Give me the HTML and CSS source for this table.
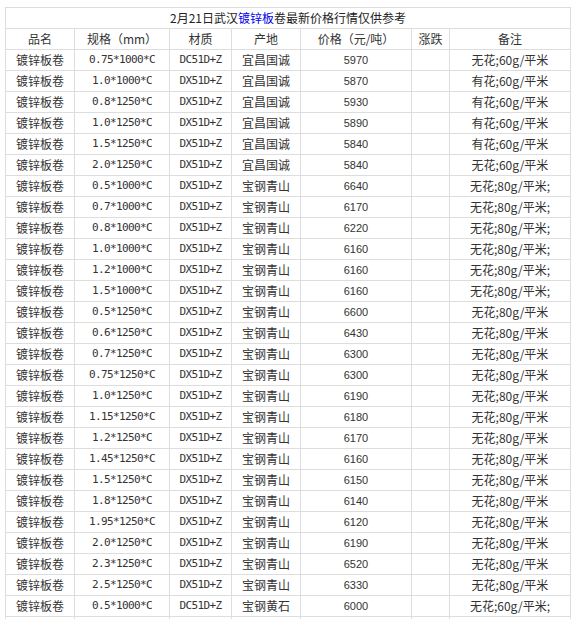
FILE: index.html
```html
<!DOCTYPE html>
<html lang="zh-CN">
<head>
<meta charset="utf-8">
<title>2月21日武汉镀锌板卷最新价格行情</title>
<link rel="stylesheet" href="styles.css">
</head>
<body>
<div class="wrap">
<table class="price">
<colgroup>
<col class="c1"><col class="c2"><col class="c3"><col class="c4"><col class="c5"><col class="c6"><col class="c7">
</colgroup>
<tr><td colspan="7" class="title">2月21日武汉<span class="hl">镀锌板</span>卷最新价格行情仅供参考</td></tr>
<tr><td>品名</td><td>规格（mm）</td><td>材质</td><td>产地</td><td>价格（元/吨）</td><td>涨跌</td><td>备注</td></tr>
<tr><td>镀锌板卷</td><td class="m">0.75*1000*C</td><td class="m">DC51D+Z</td><td>宜昌国诚</td><td class="n">5970</td><td></td><td>无花;60g/平米</td></tr>
<tr><td>镀锌板卷</td><td class="m">1.0*1000*C</td><td class="m">DX51D+Z</td><td>宜昌国诚</td><td class="n">5870</td><td></td><td>有花;60g/平米</td></tr>
<tr><td>镀锌板卷</td><td class="m">0.8*1250*C</td><td class="m">DX51D+Z</td><td>宜昌国诚</td><td class="n">5930</td><td></td><td>有花;60g/平米</td></tr>
<tr><td>镀锌板卷</td><td class="m">1.0*1250*C</td><td class="m">DX51D+Z</td><td>宜昌国诚</td><td class="n">5890</td><td></td><td>有花;60g/平米</td></tr>
<tr><td>镀锌板卷</td><td class="m">1.5*1250*C</td><td class="m">DX51D+Z</td><td>宜昌国诚</td><td class="n">5840</td><td></td><td>有花;60g/平米</td></tr>
<tr><td>镀锌板卷</td><td class="m">2.0*1250*C</td><td class="m">DX51D+Z</td><td>宜昌国诚</td><td class="n">5840</td><td></td><td>无花;60g/平米</td></tr>
<tr><td>镀锌板卷</td><td class="m">0.5*1000*C</td><td class="m">DX51D+Z</td><td>宝钢青山</td><td class="n">6640</td><td></td><td>无花;80g/平米;</td></tr>
<tr><td>镀锌板卷</td><td class="m">0.7*1000*C</td><td class="m">DX51D+Z</td><td>宝钢青山</td><td class="n">6170</td><td></td><td>无花;80g/平米;</td></tr>
<tr><td>镀锌板卷</td><td class="m">0.8*1000*C</td><td class="m">DX51D+Z</td><td>宝钢青山</td><td class="n">6220</td><td></td><td>无花;80g/平米;</td></tr>
<tr><td>镀锌板卷</td><td class="m">1.0*1000*C</td><td class="m">DX51D+Z</td><td>宝钢青山</td><td class="n">6160</td><td></td><td>无花;80g/平米;</td></tr>
<tr><td>镀锌板卷</td><td class="m">1.2*1000*C</td><td class="m">DX51D+Z</td><td>宝钢青山</td><td class="n">6160</td><td></td><td>无花;80g/平米;</td></tr>
<tr><td>镀锌板卷</td><td class="m">1.5*1000*C</td><td class="m">DX51D+Z</td><td>宝钢青山</td><td class="n">6160</td><td></td><td>无花;80g/平米;</td></tr>
<tr><td>镀锌板卷</td><td class="m">0.5*1250*C</td><td class="m">DX51D+Z</td><td>宝钢青山</td><td class="n">6600</td><td></td><td>无花;80g/平米</td></tr>
<tr><td>镀锌板卷</td><td class="m">0.6*1250*C</td><td class="m">DX51D+Z</td><td>宝钢青山</td><td class="n">6430</td><td></td><td>无花;80g/平米</td></tr>
<tr><td>镀锌板卷</td><td class="m">0.7*1250*C</td><td class="m">DX51D+Z</td><td>宝钢青山</td><td class="n">6300</td><td></td><td>无花;80g/平米</td></tr>
<tr><td>镀锌板卷</td><td class="m">0.75*1250*C</td><td class="m">DX51D+Z</td><td>宝钢青山</td><td class="n">6300</td><td></td><td>无花;80g/平米</td></tr>
<tr><td>镀锌板卷</td><td class="m">1.0*1250*C</td><td class="m">DX51D+Z</td><td>宝钢青山</td><td class="n">6190</td><td></td><td>无花;80g/平米</td></tr>
<tr><td>镀锌板卷</td><td class="m">1.15*1250*C</td><td class="m">DX51D+Z</td><td>宝钢青山</td><td class="n">6180</td><td></td><td>无花;80g/平米</td></tr>
<tr><td>镀锌板卷</td><td class="m">1.2*1250*C</td><td class="m">DX51D+Z</td><td>宝钢青山</td><td class="n">6170</td><td></td><td>无花;80g/平米</td></tr>
<tr><td>镀锌板卷</td><td class="m">1.45*1250*C</td><td class="m">DX51D+Z</td><td>宝钢青山</td><td class="n">6160</td><td></td><td>无花;80g/平米</td></tr>
<tr><td>镀锌板卷</td><td class="m">1.5*1250*C</td><td class="m">DX51D+Z</td><td>宝钢青山</td><td class="n">6150</td><td></td><td>无花;80g/平米</td></tr>
<tr><td>镀锌板卷</td><td class="m">1.8*1250*C</td><td class="m">DX51D+Z</td><td>宝钢青山</td><td class="n">6140</td><td></td><td>无花;80g/平米</td></tr>
<tr><td>镀锌板卷</td><td class="m">1.95*1250*C</td><td class="m">DX51D+Z</td><td>宝钢青山</td><td class="n">6120</td><td></td><td>无花;80g/平米</td></tr>
<tr><td>镀锌板卷</td><td class="m">2.0*1250*C</td><td class="m">DX51D+Z</td><td>宝钢青山</td><td class="n">6190</td><td></td><td>无花;80g/平米</td></tr>
<tr><td>镀锌板卷</td><td class="m">2.3*1250*C</td><td class="m">DX51D+Z</td><td>宝钢青山</td><td class="n">6520</td><td></td><td>无花;80g/平米</td></tr>
<tr><td>镀锌板卷</td><td class="m">2.5*1250*C</td><td class="m">DX51D+Z</td><td>宝钢青山</td><td class="n">6330</td><td></td><td>无花;80g/平米</td></tr>
<tr><td>镀锌板卷</td><td class="m">0.5*1000*C</td><td class="m">DC51D+Z</td><td>宝钢黄石</td><td class="n">6000</td><td></td><td>无花;60g/平米;</td></tr>
<tr><td></td><td></td><td></td><td></td><td></td><td></td><td></td></tr>
</table>
</div>
</body>
</html>
```

FILE: styles.css
```css
html, body {
  margin: 0;
  padding: 0;
  background: #fff;
}

body {
  font-family: "Noto Sans CJK SC", "Noto Sans", sans-serif;
  font-size: 12px;
  color: #333;
}

.wrap {
  padding: 7px 0 0 5px;
}

.price {
  border-collapse: collapse;
  table-layout: fixed;
  width: 565px;
}

.c1 { width: 69px; }
.c2 { width: 95px; }
.c3 { width: 62px; }
.c4 { width: 69px; }
.c5 { width: 111px; }
.c6 { width: 38px; }
.c7 { width: 121px; }

.price td {
  border: 1px solid #ddd;
  padding: 0;
  height: 20px;
  line-height: 20px;
  text-align: center;
  white-space: nowrap;
  overflow: hidden;
}

.title {
  color: #222;
}

.hl {
  color: #0000ee;
}

.m {
  font-family: "DejaVu Sans Mono", monospace;
  font-size: 11px;
  letter-spacing: -0.6px;
}

.n {
  font-family: "Liberation Sans", sans-serif;
  font-size: 11px;
}
```
